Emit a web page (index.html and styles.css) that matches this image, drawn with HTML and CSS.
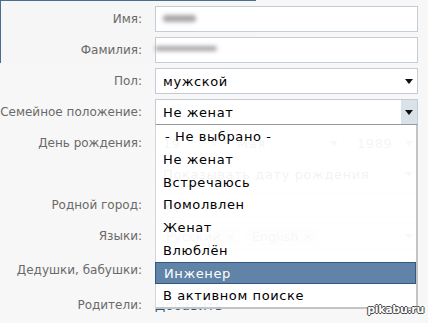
FILE: index.html
```html
<!DOCTYPE html>
<html lang="ru">
<head>
<meta charset="utf-8">
<link rel="stylesheet" href="styles.css">
</head>
<body>
<div class="page">
  <div class="frame"></div>
  <div class="form">
    <div class="row">
      <div class="lbl">Имя:</div>
      <div class="field box"><span class="blur blur-first"></span></div>
    </div>
    <div class="row">
      <div class="lbl">Фамилия:</div>
      <div class="field box"><span class="blur blur-last"></span></div>
    </div>
    <div class="row">
      <div class="lbl">Пол:</div>
      <div class="field box select"><span class="val">мужской</span><span class="arrow"></span></div>
    </div>
    <div class="row">
      <div class="lbl">Семейное положение:</div>
      <div class="field box select open"><span class="val">Не женат</span><span class="arrow-box"><span class="arrow"></span></span></div>
    </div>
    <div class="row">
      <div class="lbl">День рождения:</div>
      <div class="field triple">
        <div class="box select small d"><span class="val">19</span><span class="arrow grey"></span></div>
        <div class="box select small m"><span class="val">Мая</span><span class="arrow grey"></span></div>
        <div class="box select small y"><span class="val">1989</span><span class="arrow grey"></span></div>
      </div>
    </div>
    <div class="row">
      <div class="lbl"></div>
      <div class="field box select"><span class="val">Показывать дату рождения</span><span class="arrow grey"></span></div>
    </div>
    <div class="row">
      <div class="lbl">Родной город:</div>
      <div class="field box"><span class="val">Уфа</span></div>
    </div>
    <div class="row">
      <div class="lbl">Языки:</div>
      <div class="field box select tokens">
        <span class="token">Русский <b>×</b></span>
        <span class="token">English <b>×</b></span>
        <span class="arrow grey"></span>
      </div>
    </div>
    <div class="row row-gp">
      <div class="lbl">Дедушки, бабушки:</div>
      <div class="field plain"><span class="link">Добавить</span></div>
    </div>
    <div class="row row-par">
      <div class="lbl">Родители:</div>
      <div class="field plain"><span class="link">Добавить</span></div>
    </div>
  </div>

  <ul class="dropdown">
    <li class="first">- Не выбрано -</li>
    <li>Не женат</li>
    <li>Встречаюсь</li>
    <li>Помолвлен</li>
    <li>Женат</li>
    <li>Влюблён</li>
    <li class="sel">Инженер</li>
    <li>В активном поиске</li>
  </ul>

  <div class="watermark">pikabu.ru</div>
</div>
</body>
</html>
```

FILE: styles.css
```css
* { box-sizing: border-box; }
html, body {
  margin: 0;
  padding: 0;
  background: #f7f7f7;
}
body {
  width: 428px;
  height: 323px;
  overflow: hidden;
  font-family: "DejaVu Sans", sans-serif;
}
.page {
  position: relative;
  width: 428px;
  height: 323px;
}
/* cropped window frame peeking in from the top-left */
.frame {
  position: absolute;
  left: 0;
  top: 0;
  width: 256px;
  height: 63px;
  border-top: 1px solid #4a6d92;
  border-left: 1px solid #4a6d92;
  background: #f6f6f6;
}
.form {
  position: relative;
  padding-top: 6px;
  display: flex;
  flex-direction: column;
  gap: 5px;
}
.row {
  display: flex;
  align-items: center;
  height: 26px;
  column-gap: 13px;
}
.row-gp { margin-top: 3px; }
.row-par { margin-top: 4px; }
.lbl {
  width: 142px;
  flex: none;
  text-align: right;
  font-size: 12px;
  color: #6a6a6a;
  white-space: nowrap;
}
.field {
  width: 263px;
  height: 26px;
  flex: none;
  position: relative;
}
.box {
  background: #fff;
  border: 1px solid #c3cdd8;
  display: flex;
  align-items: center;
  padding-left: 7px;
  font-size: 13px;
  letter-spacing: 0.6px;
  color: #000;
}
.select .val { flex: 1; white-space: nowrap; }
.arrow {
  width: 0;
  height: 0;
  border-left: 4.5px solid transparent;
  border-right: 4.5px solid transparent;
  border-top: 5px solid #111;
  margin-right: 4px;
}
.arrow.grey { border-top-color: #777; }
.arrow-box {
  align-self: stretch;
  width: 16px;
  background: #dae2e9;
  display: flex;
  align-items: center;
  justify-content: center;
}
.arrow-box .arrow { margin: 0; }
.open { border-bottom: 1px solid #9a9a9a; }
.triple {
  display: flex;
  gap: 6px;
  height: 27px;
}
.triple .box { height: 27px; color: #333; }
.small.d { width: 68px; }
.small.m { width: 114px; }
.small.y { width: 69px; }
.tokens { gap: 6px; padding-left: 4px; letter-spacing: 0; }
.token {
  background: #e4eaf0;
  color: #3b5f86;
  font-size: 13px;
  padding: 2px 4px 2px 6px;
}
.token b { font-weight: normal; color: #7a90a8; }
.tokens .arrow { margin-left: auto; }
.plain { display: flex; align-items: center; }
.link { font-size: 13px; color: #2b587a; letter-spacing: 0.3px; }
.blur {
  position: absolute;
  background: #a6a6a6;
  filter: blur(2px);
  border-radius: 3px;
}
.blur-first { left: 7px; top: 8px; width: 33px; height: 7px; }
.blur-last { left: -1px; top: 8px; width: 62px; height: 5px; }

.dropdown {
  position: absolute;
  left: 155px;
  top: 125px;
  width: 263px;
  margin: 0;
  padding: 0;
  list-style: none;
  background: rgba(255, 255, 255, 0.95);
  border-left: 1px solid #d6d6d6;
  border-right: 2px solid #c4c4c4;
  border-bottom: 2px solid #c4c4c4;
  font-size: 13px;
  letter-spacing: 0.6px;
  color: #000;
}
.dropdown li {
  height: 22.75px;
  line-height: 23px;
  padding-left: 7px;
  white-space: nowrap;
}
.dropdown li.first { padding-left: 9px; }
.dropdown li.sel {
  background: rgba(86, 123, 162, 0.94);
  border: 1px solid #2f5884;
  margin-left: -1px;
  line-height: 21px;
  padding-left: 8px;
  color: #fff;
}
.watermark {
  position: absolute;
  right: 4px;
  bottom: 7px;
  font-family: "DejaVu Sans", sans-serif;
  font-size: 11px;
  font-weight: bold;
  color: #fff;
  letter-spacing: -0.3px;
  text-shadow: 1px 0 0 #444, -1px 0 0 #444, 0 1px 0 #444, 0 -1px 0 #444;
}
```
